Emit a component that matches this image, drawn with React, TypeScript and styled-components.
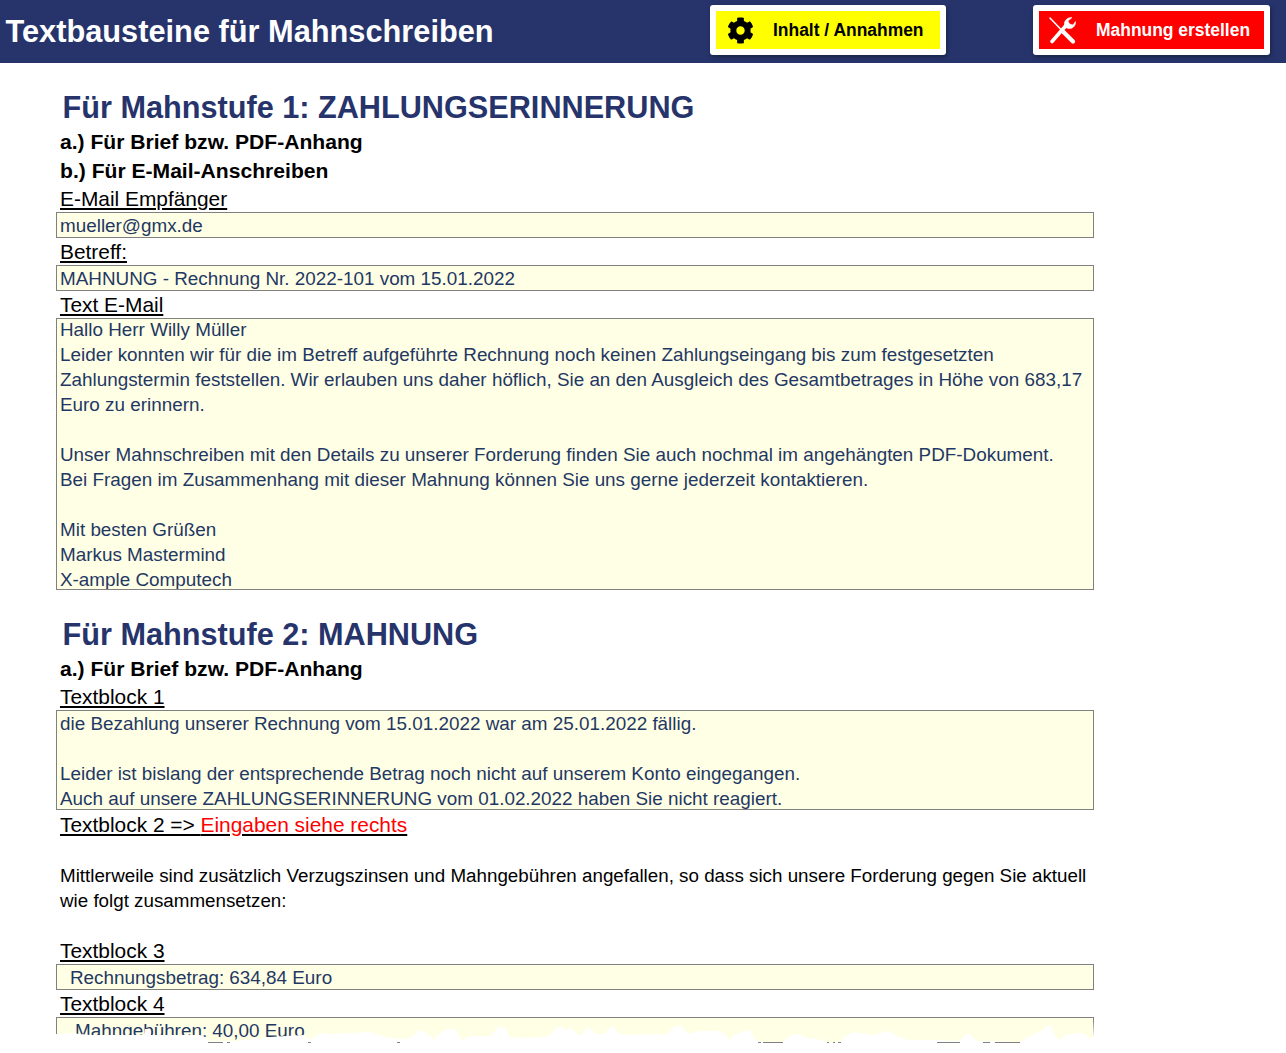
import React from "react";
import styled, { createGlobalStyle } from "styled-components";
import { FaCog } from "react-icons/fa";

const Global = createGlobalStyle`
  html, body { margin: 0; padding: 0; background: #fff; }
  body { font-family: "Liberation Sans", Arial, sans-serif; }
`;

const Page = styled.div`
  position: relative;
  width: 1286px;
  height: 1053px;
  overflow: hidden;
  background: #fff;
`;

const Header = styled.header`
  height: 63px;
  background: #26346b;
  display: flex;
  align-items: flex-start;
  padding: 5px 16px 0 5.5px;
  box-sizing: border-box;
`;

const Title = styled.h1`
  margin: 0;
  flex: 1;
  height: 52px;
  line-height: 53px;
  font-size: 30.75px;
  font-weight: 700;
  color: #fff;
  white-space: nowrap;
`;

const ActionFrame = styled.div<{ $width: number; $ml: number }>`
  width: ${(p) => p.$width}px;
  height: 50px;
  margin-left: ${(p) => p.$ml}px;
  box-sizing: border-box;
  padding: 6px 6px;
  background: #fff;
  border-radius: 3px;
  box-shadow: 1px 2px 4px rgba(0, 0, 0, 0.35);
`;

const ActionFace = styled.div<{ $bg: string; $fg: string; $gap: number; $pl: number }>`
  height: 38px;
  display: flex;
  align-items: center;
  gap: ${(p) => p.$gap}px;
  padding-left: ${(p) => p.$pl}px;
  background: ${(p) => p.$bg};
  color: ${(p) => p.$fg};
  font-size: 17.45px;
  font-weight: 700;
  white-space: nowrap;
`;

const Sheet = styled.main`
  width: 1038px;
  margin-left: 56px;
  padding-top: 26px;
`;

const SectionTitle = styled.h2<{ $mt?: number }>`
  margin: ${(p) => p.$mt ?? 0}px 0 3px;
  padding-left: 6.5px;
  height: 36px;
  line-height: 36px;
  font-size: 30.67px;
  font-weight: 700;
  color: #26346b;
  white-space: nowrap;
`;

const SubTitle = styled.h3<{ $h: number }>`
  margin: 0;
  padding-left: 4px;
  height: ${(p) => p.$h}px;
  line-height: 28px;
  font-size: 21.1px;
  font-weight: 700;
  color: #000;
`;

const FieldLabel = styled.div<{ $h?: number; $lh?: number }>`
  padding-left: 4px;
  height: ${(p) => p.$h ?? 27}px;
  line-height: ${(p) => p.$lh ?? p.$h ?? 27}px;
  font-size: 20.9px;
  color: #000;
  text-decoration: underline;
  white-space: nowrap;
`;

const Alert = styled.span`
  color: #ff0000;
`;

const InputBox = styled.div<{ $h: number; $shift?: number; $pl?: number }>`
  box-sizing: border-box;
  height: ${(p) => p.$h}px;
  border: 1px solid #808080;
  background: #ffffe5;
  overflow: hidden;
  padding-left: ${(p) => p.$pl ?? 3}px;
  color: #1f3864;
  font-size: 18.88px;
  line-height: 25px;
  white-space: pre;
  & > div {
    margin-top: ${(p) => p.$shift ?? 0}px;
  }
`;

const Plain = styled.div`
  padding-left: 4px;
  height: 100px;
  font-size: 18.8px;
  line-height: 25px;
  color: #000;
  white-space: pre;
`;

const TornEdge = styled.svg`
  position: absolute;
  left: 0;
  top: 1020px;
  display: block;
`;

const Dashes = styled.g`
  fill: #808080;
`;

const edge =
  "0,1020 56,1020 56,1034 70,1033 90,1035 130,1035 144,1035 145,1029 150,1029 151,1035 200,1035 205,1037 208,1041 " +
  "235,1041 270,1037 303,1035 310,1040 320,1033 330,1034 370,1032 385,1037 400,1039 410,1038 420,1030 428,1034 433,1040 " +
  "440,1033 448,1029 455,1029 462,1040 470,1036 490,1036 500,1026 506,1029 508,1034 512,1039 515,1037 520,1038 543,1037 " +
  "550,1035 557,1027 562,1027 567,1030 570,1027 576,1033 580,1036 584,1031 588,1027 592,1030 596,1034 605,1034 610,1027 " +
  "614,1027 618,1033 627,1035 667,1034 673,1028 680,1025 684,1029 688,1034 700,1031 717,1031 723,1033 730,1040 735,1034 " +
  "750,1030 755,1040 763,1042 783,1042 790,1036 798,1034 807,1038 817,1039 827,1042 840,1042 845,1036 853,1032 873,1035 " +
  "888,1031 897,1036 907,1040 933,1040 960,1041 968,1033 977,1041 1020,1042 1030,1036 1043,1030 1050,1024 1055,1036 " +
  "1060,1040 1067,1034 1083,1033 1090,1039 1093,1037 1094,1020 1286,1020 1286,1053 0,1053";

const dashes: [number, number][] = [
  [208, 15], [227, 3], [308, 3], [397, 3], [758, 3], [763, 20], [827, 2], [833, 2],
  [838, 3], [937, 23], [983, 7], [995, 25],
];

const ToolsIcon = () => (
  <svg width="30" height="30" viewBox="0 0 30 30" fill="none" stroke="#fff" strokeLinecap="round">
    <path d="M3 3 L14 14.5" strokeWidth="1.6" />
    <path d="M16.5 17 L26 26.5" strokeWidth="4.2" />
    <path d="M5 26.5 L19 10.5" strokeWidth="3.6" />
    <path d="M18 12 C16 7 19 2.5 25 2.5 L21 6 L22.5 9 L26 10 L28.5 6.5 C29 11 25 15 20 13 Z" fill="#fff" strokeWidth="0.6" strokeLinejoin="round" />
  </svg>
);

const GearIcon = styled(FaCog)`
  width: 27px;
  height: 27px;
  color: #000;
  flex: none;
`;

export default function App() {
  return (
    <Page>
      <Global />
      <Header>
        <Title>Textbausteine für Mahnschreiben</Title>
        <ActionFrame $width={236} $ml={0}>
          <ActionFace $bg="#ffff00" $fg="#000" $gap={19} $pl={11}>
            <GearIcon />
            Inhalt / Annahmen
          </ActionFace>
        </ActionFrame>
        <ActionFrame $width={237} $ml={87}>
          <ActionFace $bg="#ff0000" $fg="#fff" $gap={19} $pl={8}>
            <ToolsIcon />
            Mahnung erstellen
          </ActionFace>
        </ActionFrame>
      </Header>
      <Sheet>
        <SectionTitle>Für Mahnstufe 1: ZAHLUNGSERINNERUNG</SectionTitle>
        <SubTitle $h={29}>a.) Für Brief bzw. PDF-Anhang</SubTitle>
        <SubTitle $h={28}>b.) Für E-Mail-Anschreiben</SubTitle>
        <FieldLabel>E-Mail Empfänger</FieldLabel>
        <InputBox $h={26}>mueller@gmx.de</InputBox>
        <FieldLabel>Betreff:</FieldLabel>
        <InputBox $h={26}>MAHNUNG - Rechnung Nr. 2022-101 vom 15.01.2022</InputBox>
        <FieldLabel>Text E-Mail</FieldLabel>
        <InputBox $h={272} $shift={-2}>
          <div>{`Hallo Herr Willy Müller
Leider konnten wir für die im Betreff aufgeführte Rechnung noch keinen Zahlungseingang bis zum festgesetzten
Zahlungstermin feststellen. Wir erlauben uns daher höflich, Sie an den Ausgleich des Gesamtbetrages in Höhe von 683,17
Euro zu erinnern.

Unser Mahnschreiben mit den Details zu unserer Forderung finden Sie auch nochmal im angehängten PDF-Dokument.
Bei Fragen im Zusammenhang mit dieser Mahnung können Sie uns gerne jederzeit kontaktieren.

Mit besten Grüßen
Markus Mastermind
X-ample Computech`}</div>
        </InputBox>
        <SectionTitle $mt={26}>Für Mahnstufe 2: MAHNUNG</SectionTitle>
        <SubTitle $h={28}>a.) Für Brief bzw. PDF-Anhang</SubTitle>
        <FieldLabel>Textblock 1</FieldLabel>
        <InputBox $h={100}>
          <div>{`die Bezahlung unserer Rechnung vom 15.01.2022 war am 25.01.2022 fällig.

Leider ist bislang der entsprechende Betrag noch nicht auf unserem Konto eingegangen.
Auch auf unsere ZAHLUNGSERINNERUNG vom 01.02.2022 haben Sie nicht reagiert.`}</div>
        </InputBox>
        <FieldLabel $h={28} $lh={30}>
          Textblock 2 =&gt; <Alert>Eingaben siehe rechts</Alert>
        </FieldLabel>
        <Plain>{`
Mittlerweile sind zusätzlich Verzugszinsen und Mahngebühren angefallen, so dass sich unsere Forderung gegen Sie aktuell
wie folgt zusammensetzen:`}</Plain>
        <FieldLabel $h={26}>Textblock 3</FieldLabel>
        <InputBox $h={26} $pl={13}>Rechnungsbetrag: 634,84 Euro</InputBox>
        <FieldLabel>Textblock 4</FieldLabel>
        <InputBox $h={36} $pl={18}>Mahngebühren: 40,00 Euro</InputBox>
      </Sheet>
      <TornEdge width="1286" height="33" viewBox="0 1020 1286 33" aria-hidden="true">
        <polygon points={edge} fill="#fff" />
        <Dashes>
          {dashes.map(([x, w]) => (
            <rect key={x} x={x} y={1042} width={w} height={1} />
          ))}
        </Dashes>
      </TornEdge>
    </Page>
  );
}
